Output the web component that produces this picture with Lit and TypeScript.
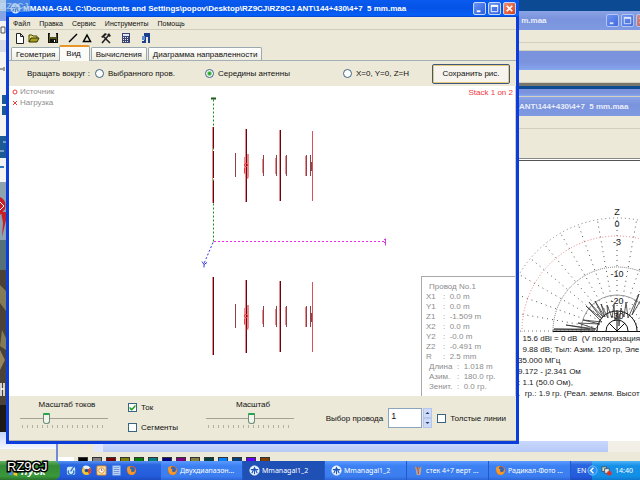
import { LitElement, html, svg, css } from "lit";
import { customElement } from "lit/decorators.js";

const fox = svg`<circle cx="6" cy="6" r="5" fill="#e86a10"/><circle cx="6.6" cy="5" r="3" fill="#3266b8"/><path d="M1 4Q2 0 5 2Q3 4 6 5Q4 8 9 8Q11 6 10 3Q12 8 8 10.500Q2 12 1 4Z" fill="#f39a2b"/>`;
const mmana = svg`<circle cx="6" cy="6" r="5" fill="#e9f3ff"/><circle cx="6" cy="6" r="5" fill="none" stroke="#fff"/><path d="M3 9L6 3L9 9M2 5h8M6 3v7" stroke="#1d56b8" stroke-width="1.200" fill="none"/>`;
const paint = svg`<path d="M3 5l-1-4l3 3l0-3l2 3l2-3l0 4z" fill="#d99a4a"/><path d="M3 5h6l-1 6H4z" fill="#b9a99a"/><path d="M5 2l1 8" stroke="#c33"/>`;
const icon = (body: unknown) => html`<svg class="ico" viewBox="0 0 12 12" aria-hidden="true">${body}</svg>`;

const tasks = [
  { text: "Двухдиапазон...", art: fox, on: false },
  { text: "Mmanagal1_2", art: mmana, on: true },
  { text: "Mmanagal1_2", art: mmana, on: false },
  { text: "стек 4+7 верт ...", art: paint, on: false },
  { text: "Радикал-Фото ...", art: fox, on: false },
];

const quick = [
  svg`<rect x="1" y="2" width="9" height="9" rx="2" fill="#cfe6fa"/><path d="M9 1L5 7M3 6a3 3 0 1 0 5 0" stroke="#2a78c8" fill="none" stroke-width="1.500"/>`,
  svg`<circle cx="6" cy="6" r="5" fill="#f3c62e"/><path d="M6 6L2 2A5 5 0 0 1 10 3Z" fill="#e5eefa"/><path d="M6 6L10 3A5 5 0 0 1 9 10Z" fill="#d8452c"/><circle cx="6" cy="6" r="2" fill="#284f9a"/>`,
  svg`<rect x="1" y="1" width="10" height="10" rx="1" fill="#f7e2b0" stroke="#e08a1c"/><circle cx="6" cy="6" r="3" fill="#fff" stroke="#e08a1c"/><path d="M6 4v2h1" stroke="#b45" fill="none"/>`,
  svg`<rect x="2" y="1" width="8" height="10" fill="#dbe8fb" stroke="#7fa8e8"/><path d="M3 3h6M3 5h6M3 7h6M3 9h6" stroke="#5a86d0"/>`,
  fox,
];

const swatches = ["#000", "#808080", "#800000", "#808000", "#008000", "#008080", "#000080", "#800080", "#808040", "#004040", "#0080ff", "#004080", "#6a00ff", "#804000"];

const wire = [
  ["Провод No.1", ""],
  ["X1", "0.0 m"], ["Y1", "0.0 m"], ["Z1", "-1.509 m"],
  ["X2", "0.0 m"], ["Y2", "-0.0 m"], ["Z2", "-0.491 m"],
  ["R", "2.5 mm"], ["Длина", "1.018 m"], ["Азим.", "180.0 гр."], ["Зенит.", "0.0 гр."],
];

const facts = [
  "  15.6 dBi = 0 dB  (V поляризация",
  "  9.88 dB; Тыл: Азим. 120 гр, Эле",
  "35.000 МГц",
  "9.172 - j2.341 Ом",
  ": 1.1 (50.0 Ом),",
  ".  гр.: 1.9 гр. (Реал. земля. Высот",
];

const tools = [
  { name: "Новый", gap: 0, art: svg`<path d="M2.500 1.500h4l3 3v7h-7zM6.500 1.500v3h3" fill="#fff" stroke="#222"/>` },
  { name: "Открыть", gap: 2, art: svg`<path d="M1 10V3h3l1 1h4v2" fill="#e8e070" stroke="#444400"/><path d="M1 10l2-4h8l-2 4z" fill="#a8a020" stroke="#333300"/>` },
  { name: "Сохранить", gap: 7, art: svg`<rect x="1.500" y="1.500" width="9" height="9" fill="#55551a" stroke="#111"/><rect x="3" y="1" width="6" height="4" fill="#e8e8e0"/><rect x="3" y="7" width="6" height="4" fill="#111"/><rect x="7" y="8" width="1" height="2" fill="#fff"/>` },
  { name: "Линия", gap: 8, art: svg`<path d="M2 10L10 2" stroke="#000" stroke-width="1.500"/>` },
  { name: "Треугольник", gap: 2, art: svg`<path d="M6 3L9.500 9.500H2.500z" fill="none" stroke="#000" stroke-width="1.500"/>` },
  { name: "Настройка", gap: 7, art: svg`<path d="M2 11L8 4M10 11L4 5" stroke="#222" stroke-width="1.600"/><path d="M1 5L5 1L7 2L3 6zM7 3l2-2l2 3l-2 1z" fill="#222"/>` },
  { name: "Калькулятор", gap: 8, art: svg`<rect x="2" y="1" width="8" height="10" fill="#3c4470"/><rect x="3" y="2" width="6" height="2" fill="#dfe6f5"/><path d="M3 5.500h6M3 7.500h6M3 9.500h6" stroke="#dfe6f5" stroke-dasharray="1 1"/>` },
  { name: "Выход", gap: 8, art: svg`<path d="M4 1h6v10H8V5H6v6H2V9h2z" fill="#1c3f8c"/><path d="M2 4h3v4H2z" fill="#5a8ad8"/>` },
];

const controls = (dim: boolean) => html`<span class="caps ${dim ? "dim" : ""}">
  <button class="cap" aria-label="Свернуть"><svg viewBox="0 0 12 12"><path d="M3 9h4" stroke="#fff" stroke-width="2"/></svg></button>
  <button class="cap" aria-label="Развернуть"><svg viewBox="0 0 12 12"><path d="M2.500 3.500h7v6h-7z" fill="none" stroke="#fff"/><path d="M2 3h8" stroke="#fff" stroke-width="2"/></svg></button>
  <button class="cap shut" aria-label="Закрыть"><svg viewBox="0 0 12 12"><path d="M3 3l6 6M9 3l-6 6" stroke="#fff" stroke-width="1.800"/></svg></button>
</span>`;

const stack = (dy: number, solid: boolean) => svg`<g transform="translate(0 ${dy})">
  ${solid
    ? svg`<path class="glow" d="M204 40V118"/><path class="rod" d="M205 40V118"/>`
    : svg`<path class="glow" d="M204 41V117"/><path class="rod" d="M205 41V62M205 65V92M205 95V117"/>`}
  <path class="glow" d="M237 43V116M271 44V115"/>
  <path class="rod" d="M238 43V116M272 44V115"/>
  <path class="thin" d="M304 45V115"/>
  <path class="mid" d="M227 67V91M255 69V90M268 69V90M278 69V90M298 69V90M302 69V90M303 76V85"/>
  <path class="glow" d="M254 73V87M277 70V88M267 72V88M297 70V90M236 71V88M239 68V92M240 68V91"/>
  <path class="src" d="M235.500 79l2-2l2 2l-2 2zM236 82V87M240 92h-2"/>
</g>`;

@customElement("app-root")
export class AppRoot extends LitElement {
  static styles = css`
    :host { display: block; position: relative; height: 100vh; overflow: hidden; background: #0c4a94;
      font: 8px/11px "Liberation Sans", Arial, sans-serif; color: #111; }
    * { box-sizing: border-box; }
    button, input { font: inherit; color: inherit; margin: 0; padding: 0; }
    svg { display: block; }
    .desk { display: flex; flex-direction: column; height: 100%; }
    .space { flex: 1; position: relative; min-height: 0; }

    /* windows behind */
    .west { position: absolute; left: 0; top: 0; bottom: 0; width: 57px; background: #ece9d8; }
    .west svg { width: 6px; height: 432px; }
    .sill { height: 17px; background: linear-gradient(#c4d4fa, #f4f7ff); }
    .paint { position: absolute; left: 56px; right: 0; bottom: 0; height: 17px; background: #ece9d8; border-left: 2px solid #6f8ad6; display: flex; flex-direction: column; justify-content: space-between; }
    .hbar { height: 8px; margin-left: 36px; background: linear-gradient(#c8d8fd, #b6c9f6); border-left: 9px solid #dfe8fd; border-right: 32px solid #f1efe6; }
    .palette { display: flex; gap: 4px; height: 4px; }
    .tint { width: 16px; background: #fff; }
    .swatch { width: 10px; height: 4px; border: 1px solid #333; border-bottom: 0; }
    .east { position: absolute; left: 516px; right: 0; top: 0; bottom: 9px; display: flex; flex-direction: column; background: #fff; overflow: hidden; }
    .sky { height: 11px; background: #0c4a94; flex: none; }
    .ttl { height: 19px; flex: none; background: linear-gradient(#8ba4e6, #7a93dc 40%, #7f9ae2); color: #e8edfb; display: flex; align-items: center; justify-content: space-between; font-weight: bold; white-space: pre; overflow: hidden; padding-left: 3px; }
    .strip { height: 13px; flex: none; background: #ece9d8; border-bottom: 1px solid #d2cfbf; }
    .blue { height: 19px; flex: none; background: linear-gradient(#7a93dc 60%, #86a6ee); }
    .edge { height: 3px; flex: none; background: #77756c; }
    .deep { height: 3px; flex: none; background: #0c4a94; }
    .short { height: 8px; }
    .tall { height: 29px; border-bottom: 0; }
    .rule { height: 3px; flex: none; border-top: 1px solid #888; border-bottom: 1px solid #555; }
    .polar { height: 172px; width: 124px; flex: none; }
    .polar text { font-size: 9px; fill: #222; text-anchor: middle; }
    .facts { margin: 0; padding-left: 2px; white-space: pre; color: #222; }
    .facts p { margin: 0; }
    .foothold { margin-top: auto; height: 11px; flex: none; background: linear-gradient(#c8d8fd, #b6c9f6); border-right: 32px solid #f1efe6; }

    /* main window */
    .win { position: absolute; left: 6px; right: 121px; top: 0; bottom: 17px; display: flex; flex-direction: column; background: #ece9d8; border: solid #0b3cdc; border-width: 0 3px 3px; }
    .bar { height: 17px; flex: none; margin: 0 -3px; padding: 0 3px 0 4px; background: linear-gradient(#0a5af0, #0453e6 50%, #0560f8 90%, #0340c8); display: flex; align-items: center; gap: 2px; color: #fff; font-weight: bold; white-space: pre; }
    .bar h1 { font: inherit; margin: 0; flex: 1; overflow: hidden; }
    .ico { width: 11px; height: 11px; flex: none; }
    .caps { display: flex; gap: 2px; font-size: 0; white-space: normal; }
    .cap { width: 13px; height: 13px; border: 1px solid #c5d6fb; border-radius: 2px; background: linear-gradient(135deg, #6b94f4, #2c5ddd); }
    .cap svg { width: 11px; height: 11px; }
    .shut { background: linear-gradient(135deg, #f09070, #d8401c); }
    .dim { opacity: .75; margin-right: -9px; }
    .menu { display: flex; height: 13px; flex: none; align-items: center; padding-left: 4px; gap: 9px; border-bottom: 1px solid #d0cdbd; font-size: 7px; }
    .menu button, .tool { border: 0; background: none; }
    .kit { display: flex; height: 16px; flex: none; align-items: center; padding: 0 5px; }
    .tool svg { width: 12px; height: 12px; }
    .tabs { display: flex; height: 15px; flex: none; align-items: flex-end; border-bottom: 1px solid #a5b0b5; padding-left: 2px; }
    .tab { height: 13px; background: linear-gradient(#fff, #efede2); border: 1px solid #9aa8b0; border-bottom: 0; border-radius: 2px 2px 0 0; padding: 0 4px; white-space: nowrap; margin-right: 1px; }
    .tab.on { height: 16px; margin-bottom: -1px; border-top: 2px solid #e8952a; background: #fcfbf8; padding: 0 8px 2px 6px; margin-left: -2px; }
    .opts { display: flex; align-items: center; height: 25px; flex: none; padding: 0 6px 0 18px; gap: 5px; }
    .opts label, .check { display: flex; align-items: center; gap: 4px; white-space: nowrap; }
    .mid-opt { margin-left: 25px; }
    .far { margin-left: auto; }
    .save { width: 78px; height: 20px; border: 1px solid #3c5a80; border-radius: 2px; background: #f6f4ec; box-shadow: inset 0 0 0 1px #e8c878; margin-left: 18px; }
    input[type="radio"], input[type="checkbox"] { appearance: none; width: 9px; height: 9px; border: 1px solid #3a6484; background: #fff; flex: none; display: grid; place-items: center; }
    input[type="radio"] { border-radius: 50%; }
    input[type="radio"]:checked { background: radial-gradient(circle, #28a828 0 1px, #fff 3px); }
    input[type="checkbox"]:checked::before { content: ""; width: 7px; height: 7px; background: #21a121; clip-path: polygon(8% 40%, 40% 66%, 92% 8%, 92% 38%, 40% 96%, 8% 70%); }
    .view { flex: 1; position: relative; background: #fff; border-right: 1px solid #cfccbf; min-height: 0; overflow: hidden; display: flex; justify-content: space-between; }
    .plot { position: absolute; left: 0; top: 0; width: 400px; height: 310px; }
    .rod { stroke: #5a0a12; fill: none; }
    .glow { stroke: #f0898c; fill: none; }
    .thin { stroke: #dc5058; fill: none; }
    .mid { stroke: #8c4246; fill: none; }
    .src { stroke: #e83c40; fill: none; }
    .legend { list-style: none; margin: 0; padding: 0 0 0 3px; color: #8e8e8e; position: relative; }
    .legend li { display: flex; align-items: center; gap: 2px; }
    .legend svg { width: 6px; height: 6px; }
    .note { color: #f03840; position: relative; padding: 1px 2px 0 0; }
    .info { position: absolute; right: 0; bottom: 0; width: 94px; height: 120px; border: solid #aaa; border-width: 1px 0 0 1px; background: #fff; color: #8c8c8c; padding: 5px 0 0 4px; line-height: 10px; }
    .info dl { margin: 0; }
    .info div { display: flex; }
    .info dt { width: 17px; white-space: nowrap; }
    .info dd { margin: 0; white-space: pre; }
    .info .wide dt { width: 31px; padding-left: 3px; }
    .foot { height: 45px; flex: none; display: flex; border-bottom: 1px solid #b4b1a4; }
    .slide { width: 90px; margin-left: 10px; text-align: center; padding-top: 3px; flex: none; display: flex; flex-direction: column; }
    .slide span { padding-left: 6px; }
    .slide input { appearance: none; width: 100%; height: 12px; background: linear-gradient(#a4a294, #a4a294) center / 88px 1px no-repeat; margin-top: 2px; }
    .slide input::-webkit-slider-thumb { appearance: none; width: 7px; height: 11px; border: 1px solid #6c8c74; border-top: 2px solid #22a84a; border-radius: 1px 1px 3px 3px; background: #f4f4ee; }
    .slide i { height: 3px; margin: 1px 3px 0; background: repeating-linear-gradient(90deg, #b4b1a4 0 1px, #0000 1px 5px); }
    .pair { display: flex; flex-direction: column; justify-content: space-between; padding: 6px 0 7px; margin-left: 19px; width: 67px; flex: none; }
    .pick { display: flex; align-items: center; margin-left: auto; gap: 5px; padding-right: 10px; white-space: nowrap; }
    .spin { display: flex; gap: 1px; }
    .spin input { width: 34px; height: 20px; border: 1px solid #8aa4c0; background: #fff; padding: 0 2px 4px; outline: 0; font-size: 9px; }
    .spin div { display: flex; flex-direction: column; }
    .step { width: 9px; height: 10px; border: 1px solid #b4c6ee; background: #cddafa; }
    .step svg { width: 7px; height: 8px; }

    /* taskbar */
    .task { height: 19px; flex: none; display: flex; background: linear-gradient(#5a94f2, #2a66e0 20%, #245cdc 80%, #1d4cc0); color: #fff; align-items: stretch; font: 7px/11px "Noto Sans", Tahoma, sans-serif; }
    .start { width: 60px; border: 0; background: linear-gradient(#62b262, #358a35 25%, #3a983a 80%, #2a702a); border-radius: 0 6px 6px 0; color: #fff; font: italic bold 11px/14px "Liberation Sans", sans-serif; display: flex; align-items: center; gap: 2px; padding-left: 8px; }
    .quick { display: flex; gap: 4px; align-items: center; padding-left: 6px; width: 101px; }
    .run { flex: 0 1 82px; min-width: 0; border: 0; border-right: 1px solid #2358c8; background: linear-gradient(#5d9bff, #3c81f3 25%, #3c7ef0 80%, #2c66d8); color: #fff; display: flex; align-items: center; gap: 2px; padding-left: 6px; white-space: nowrap; }
    .run.on { background: #1e50b6; }
    .tray { flex: 1; display: flex; align-items: center; justify-content: space-between; padding-left: 6px; }
    .clock { display: flex; gap: 3px; align-items: center; align-self: stretch; background: linear-gradient(#4fb4f6, #1690e8 25%, #1290e6 80%, #0f78cc); padding: 0 7px 0 0; }
    .clock svg:first-child { margin-left: -5px; }
    .mark { position: absolute; left: 7px; bottom: 5px; font: 13px/16px "Liberation Sans", sans-serif; color: #fff; -webkit-text-stroke: 3px #000; paint-order: stroke fill; }
    .ghost { position: absolute; left: 0; top: 0; width: 30px; height: 12px; background: #7aa8dc88; color: #c4dcf6aa; font: bold 9px/12px "Liberation Sans", sans-serif; }
  `;

  render() {
    return html`<div class="desk">
      <div class="space">${this.west()}${this.paintWin()}${this.east()}${this.main()}</div>
      ${this.taskbar()}
      <span class="ghost">RZ9CJ</span>
      <span class="mark">RZ9CJ</span>
    </div>`;
  }

  west() {
    return html`<div class="west">
      <svg viewBox="0 0 6 432" aria-hidden="true">
        <path d="M0 0h6v444H0z" fill="#f4f4f2"/><path d="M0 11h6v10H0z" fill="#86a4e4"/>
        <path d="M0 40h6v12H0z" fill="#d8dde8"/><path d="M1 27h4v6H1z" fill="none" stroke="#555"/><path d="M0 69h3M4 67v4" stroke="#444"/>
        <path d="M2 95h4v9H2zM2 106h4v9H2zM0 136h6v22H0z" fill="#1c5a96"/><path d="M3 142h3M0 151h4" stroke="#cfe0ee"/>
        <path d="M0 167h4" stroke="#2a7ac8" stroke-width="2"/>
        <path d="M0 182h6v80H0z" fill="#8da4b0"/><path d="M0 197q7 3 5 12l-5 6zM1 212h5v8L2 237l1-14z" fill="#c81e28"/><path d="M0 202l4 4l-4 4" stroke="#fff" fill="none"/>
        <path d="M0 240h6v50H0z" fill="#56707a"/><path d="M0 270h6v162H0z" fill="#4a4238"/>
        <path d="M0 285l6 6v20l-6-8zM2 330l4 8v12l-6-4z" fill="#857a56"/><path d="M0 350l5 10l-5 10z" fill="#96855c"/>
        <path d="M1 383v13M1 389h3M4 383v13" stroke="#fff" stroke-width="1.500"/><path d="M0 405h6v27H0z" fill="#1c1916"/>
      </svg>
      <div class="sill"></div>
    </div>`;
  }

  paintWin() {
    return html`<div class="paint"><div class="hbar"></div>
      <div class="palette"><span class="tint"></span>${swatches.map((c) => html`<span class="swatch" style="background:${c}"></span>`)}</div>
    </div>`;
  }

  east() {
    const spokes = Array.from({ length: 17 }, (_, i) => {
      const a = (Math.PI * (i + 1)) / 18;
      return `M${101 - 20 * Math.cos(a)} ${170 - 20 * Math.sin(a)}L${101 - 113 * Math.cos(a)} ${170 - 113 * Math.sin(a)}`;
    }).join("");
    return html`<div class="east">
      <div class="sky"></div>
      <div class="ttl"><span> m.maa</span>${controls(true)}</div>
      <div class="strip"></div><div class="strip short"></div>
      <div class="blue"></div><div class="strip"></div>
      <div class="edge"></div><div class="deep"></div><div class="strip short blue"></div>
      <div class="ttl"><span>ANT\\144+430\\4+7  5 mm.maa</span></div>
      <div class="strip"></div><div class="strip tall"></div><div class="rule"></div>
      <svg class="polar" viewBox="0 0 124 172" role="img" aria-label="Диаграмма">
        <g fill="none" stroke="#777">
          <path d="${spokes}" stroke-dasharray="1 4" stroke="#555"/>
          <path d="M0 170h81" stroke-dasharray="1 3"/>
          <circle cx="101" cy="170" r="113" stroke-dasharray="1 3"/>
          <circle cx="101" cy="170" r="95" stroke="#e88080" stroke-dasharray="1 2"/>
          <circle cx="101" cy="170" r="64" stroke-dasharray="1 1"/>
          <circle cx="101" cy="170" r="36" stroke="#999"/>
          <path d="M81 170a20 20 0 0 1 40 0M90 170a11 11 0 0 1 22 0M101 170v-20M101 170l-8-8M101 170l8-8" stroke="#111"/>
          <path d="M37 169l42 0l-41-1l36 0l-24-4l30 4l-18-6l22 1l-17-4l19 2l-16-16l16 13l-13-17l14 15l-8-16l10 16l-4-13l7 14l-1-13l5 13l2-14l1 16l3-8l1 14l2-18l3 9l2-15l2 16l11-24l-7 21l10-17" stroke="#333" stroke-width="0.800"/>
          <path d="M37 170.500h87" stroke="#111"/>
        </g>
        <text x="101" y="54">Z</text><text x="101" y="66">0</text><text x="101" y="84">-3</text>
        <text x="101" y="116">-10</text><text x="101" y="143">-20</text><text x="101" y="158">-30</text>
      </svg>
      <div class="facts">${facts.map((f) => html`<p>${f}</p>`)}</div>
      <div class="foothold"></div>
    </div>`;
  }

  main() {
    return html`<section class="win">
      <header class="bar">${icon(mmana)}<h1>MMANA-GAL C:\\Documents and Settings\\popov\\Desktop\\RZ9CJ\\RZ9CJ ANT\\144+430\\4+7  5 mm.maa</h1>${controls(false)}</header>
      <nav class="menu">${["Файл", "Правка", "Сервис", "Инструменты", "Помощь"].map((m) => html`<button>${m}</button>`)}</nav>
      <div class="kit">${tools.map((t) => html`<button class="tool" aria-label=${t.name} style="margin-left:${t.gap}px"><svg viewBox="0 0 12 12">${t.art}</svg></button>`)}</div>
      <div class="tabs">${["Геометрия", "Вид", "Вычисления", "Диаграмма направленности"].map((t, i) => html`<button class="tab ${i === 1 ? "on" : ""}">${t}</button>`)}</div>
      <div class="opts"><span>Вращать вокруг :</span>
        <label><input type="radio" name="pivot" />Выбранного пров.</label>
        <label class="mid-opt"><input type="radio" name="pivot" checked />Середины антенны</label>
        <label class="far"><input type="radio" name="pivot" />X=0, Y=0, Z=H</label>
        <button class="save">Сохранить рис.</button>
      </div>
      <div class="view">
        <svg class="plot" viewBox="0 0 400 310" role="img" aria-label="Антенна">
          <g transform="translate(0 0.5)">
            <path d="M202 12h5" stroke="#1c5a1c" stroke-width="2"/>
            <path d="M204.500 13V155" stroke="#149014" stroke-dasharray="2 2"/>
            <path d="M205 155L376 155" stroke="#f426f4" stroke-dasharray="2 2"/>
            <path d="M376.500 152v7M375 153h2M375 156h2" stroke="#d838e0"/>
            <path d="M204 156L195 177" stroke="#3030e8" stroke-dasharray="2 2" fill="none"/>
            <path d="M193 175l2 3l3-2M195 178v3" stroke="#3838e0" fill="none"/>
          </g>
          <g transform="translate(-0.5 0)">${stack(0, false)}${stack(151, true)}</g>
        </svg>
        <ul class="legend">
          <li><svg viewBox="0 0 6 6"><circle cx="3" cy="3" r="2" fill="none" stroke="#e84040"/></svg>Источник</li>
          <li><svg viewBox="0 0 6 6"><path d="M1 1l4 4M5 1l-4 4" stroke="#e84040"/></svg>Нагрузка</li>
        </ul>
        <span class="note">Stack 1 on 2</span>
        <div class="info"><dl>${wire.map(([k, v], i) => html`<div class=${i === 0 || i > 7 ? "wide" : ""}><dt>${k}</dt><dd>${v ? ":  " + v : ""}</dd></div>`)}</dl></div>
      </div>
      <footer class="foot">
        <label class="slide"><span>Масштаб токов</span><input type="range" value="29" /><i></i></label>
        <div class="pair">
          <label class="check"><input type="checkbox" checked />Ток</label>
          <label class="check"><input type="checkbox" />Сегменты</label>
        </div>
        <label class="slide"><span>Масштаб</span><input type="range" value="52" /><i></i></label>
        <div class="pick"><label for="wire">Выбор провода</label>
          <span class="spin"><input id="wire" type="text" value="1" />
            <div>
              <button class="step" aria-label="Больше"><svg viewBox="0 0 7 8"><path d="M1.500 5l2-2l2 2z" fill="#24386c"/></svg></button>
              <button class="step" aria-label="Меньше"><svg viewBox="0 0 7 8"><path d="M1.500 3l2 2l2-2z" fill="#24386c"/></svg></button>
            </div></span>
          <label class="check"><input type="checkbox" />Толстые линии</label>
        </div>
      </footer>
    </section>`;
  }

  taskbar() {
    return html`<div class="task">
      <button class="start">${icon(svg`<path d="M1 3l4-1v4l-4 1z" fill="#e8502c"/><path d="M6 2l4 1v4l-4-1z" fill="#7cc83c"/><path d="M1 8l4-1v4l-4 0z" fill="#4a8af0"/><path d="M6 7l4 1v4l-4-1z" fill="#f8c828"/>`)}пуск</button>
      <div class="quick">${quick.map((q) => icon(q))}</div>
      ${tasks.map((t) => html`<button class="run ${t.on ? "on" : ""}">${icon(t.art)}${t.text}</button>`)}
      <div class="tray"><span>EN</span>
        <div class="clock">${icon(svg`<circle cx="6" cy="6" r="5" fill="#2c8cf0" stroke="#7cc4ff"/><path d="M7 3L4 6l3 3" stroke="#fff" stroke-width="1.500" fill="none"/>`)}${icon(svg`<rect x="1" y="2" width="5" height="5" fill="#cfe0c8" stroke="#456"/><rect x="4" y="4" width="5" height="5" fill="#e8e8e8" stroke="#456"/><circle cx="9" cy="9" r="2.500" fill="#e03020"/>`)}<span>14:40</span></div>
      </div>
    </div>`;
  }
}
